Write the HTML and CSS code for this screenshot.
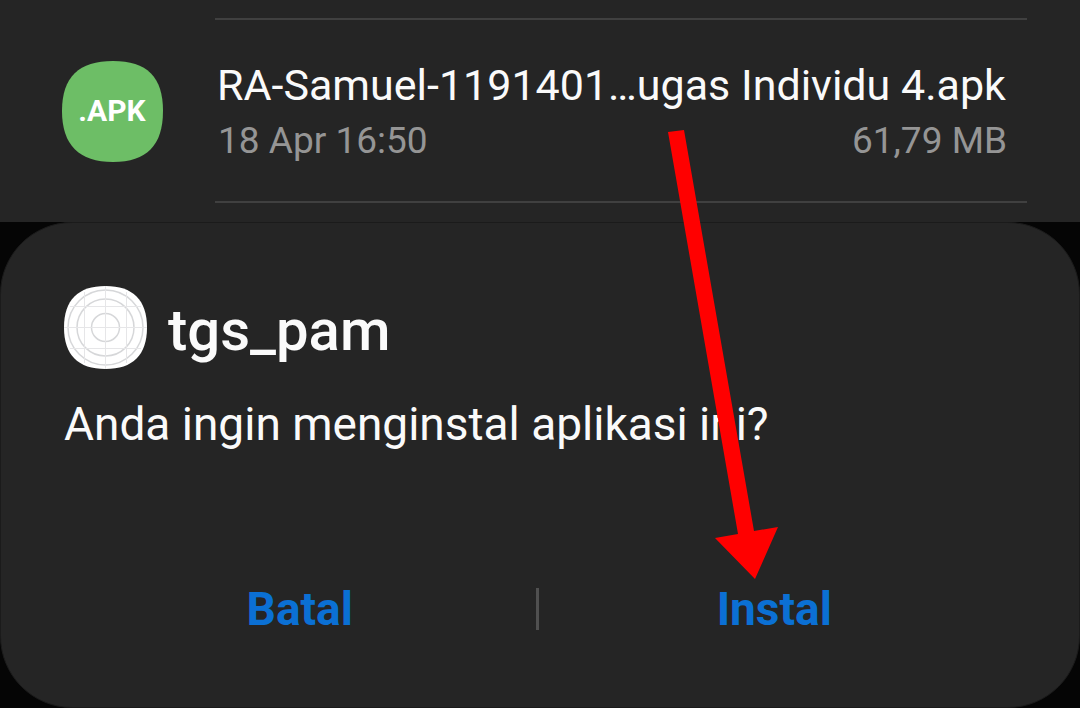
FILE: index.html
```
<!DOCTYPE html>
<html lang="id">
<head>
<meta charset="utf-8">
<title>tgs_pam</title>
<link rel="stylesheet" href="styles.css">
</head>
<body>
<main class="screen">
  <section class="files">
    <article class="file">
      <svg class="file-icon" viewBox="0 0 102 102" role="img" aria-label=".APK">
        <path d="M51 1C85 1 101 17 101 51S85 102 51 102 0 85 0 51 17 1 51 1Z" fill="#6dbe66"/>
        <text class="file-type" x="50" y="61" text-anchor="middle">.APK</text>
      </svg>
      <div class="file-info">
        <div class="file-name">RA-Samuel-1191401…ugas Individu 4.apk</div>
        <div class="file-meta"><span>18 Apr 16:50</span><span>61,79 MB</span></div>
      </div>
    </article>
  </section>
  <section class="dialog">
    <header class="app">
      <svg class="app-icon" viewBox="0 0 84 84" aria-hidden="true">
        <path d="M41.500 0C69 0 83 14 83 41.500S69 83 41.500 83 0 69 0 41.500 14 0 41.500 0Z" fill="#fff"/>
        <g fill="none" stroke="#d6d7d9" stroke-width="1.500">
          <circle cx="41.500" cy="41.500" r="14"/><circle cx="41.500" cy="41.500" r="28.500"/><circle cx="41.500" cy="41.500" r="37.500"/>
          <path d="M41.500 0V83M0 41.500H83M20.500 6V77M62.500 6V77M6 20.500H77M6 62.500H77" stroke="#e6e6e8" stroke-width="1"/>
        </g>
      </svg>
      <h1 class="app-name">tgs_pam</h1>
    </header>
    <p class="question">Anda ingin menginstal aplikasi ini?</p>
    <div class="actions">
      <button class="action" type="button">Batal</button>
      <span class="divider"></span>
      <button class="action" type="button">Instal</button>
    </div>
  </section>
  <svg class="arrow" viewBox="0 0 120 460" aria-hidden="true">
    <path d="M8 12L24 10L94 411L118 407L95 459L55 418L78 414Z" fill="#f00"/>
  </svg>
</main>
</body>
</html>
```
FILE: styles.css
```
* { box-sizing: border-box; }
body { margin: 0; background: #050505; color: #fafafa; font-family: Roboto, sans-serif; }
.screen { position: relative; min-height: 100vh; display: flex; flex-direction: column; }
.files { padding: 18px 53px 19px 62px; background: #252525; }
.file { display: flex; gap: 51px; align-items: center; }
.file-icon { width: 102px; height: 102px; flex: none; }
.file-type { font-size: 30px; font-weight: 700; fill: #fff; }
.file-info { flex: 1; border: solid #404040; border-width: 2px 0; padding: 38px 20px 31px 2px; }
.file-name { font-size: 43px; line-height: 54px; white-space: nowrap; }
.file-meta { display: flex; justify-content: space-between; padding-left: 1px; font-size: 37px; line-height: 58px; color: #959595; }
.dialog { flex: 1; background: #252525; border: 1px solid #1b1b1b; border-radius: 72px; padding: 63px; }
.app { display: flex; align-items: flex-start; gap: 20px; }
.app-icon { width: 84px; height: 84px; }
.app-name { margin: 0; font-size: 58px; line-height: 88px; font-weight: 500; }
.question { margin: 22px 0 0; font-size: 46px; line-height: 56px; }
.actions { display: flex; align-items: center; margin: 129px 6px 0 0; }
.action { flex: 1; border: 0; padding: 0; background: none; color: #0b70d4; font: 700 46px/56px Roboto, sans-serif; }
.divider { width: 3px; height: 42px; background: #505050; }
.arrow { position: absolute; left: 660px; top: 120px; width: 120px; height: 460px; }
```
